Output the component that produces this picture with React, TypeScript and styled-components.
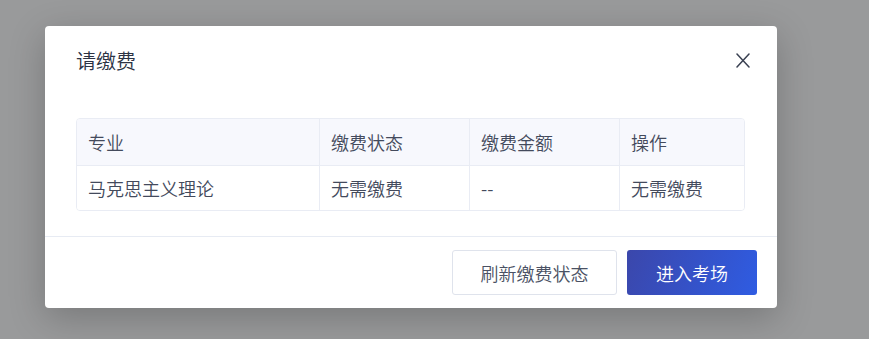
import React from "react";
import styled, { createGlobalStyle } from "styled-components";

const Global = createGlobalStyle`
  html, body { margin: 0; padding: 0; }
  body {
    background: #999a9b;
    font-family: "Noto Sans CJK SC", "Noto Sans", sans-serif;
  }
`;

const Overlay = styled.div`
  height: 339px;
  box-sizing: border-box;
  padding: 26px 0 0 45px;
  overflow: hidden;
`;

const Modal = styled.div`
  width: 732px;
  background: #ffffff;
  border-radius: 4px;
  box-shadow: 0 10px 36px rgba(0, 0, 0, 0.22);
`;

const Header = styled.div`
  display: flex;
  align-items: center;
  justify-content: space-between;
  padding: 23px 26px 0 31px;
  height: 23px;
`;

const Title = styled.h2`
  margin: 0;
  font-size: 20px;
  line-height: 22px;
  font-weight: 350;
  color: #2c3344;
`;

const CloseButton = styled.button`
  display: flex;
  align-items: center;
  justify-content: center;
  width: 16px;
  height: 16px;
  padding: 0;
  border: none;
  background: transparent;
  color: #3a4152;
  cursor: pointer;
`;

const Body = styled.div`
  padding: 46px 32px 25px 31px;
`;

const Table = styled.div`
  display: grid;
  grid-template-columns: 242px 150px 150px 1fr;
  border: 1px solid #e9ecf4;
  border-radius: 4px;
  overflow: hidden;
`;

const Cell = styled.div<{ $head?: boolean; $first?: boolean }>`
  display: flex;
  align-items: center;
  box-sizing: border-box;
  height: ${(p) => (p.$head ? 46 : 45)}px;
  padding: 0 11px;
  font-size: 18px;
  font-weight: 350;
  color: #434a5c;
  background: ${(p) => (p.$head ? "#f7f8fd" : "#ffffff")};
  border-left: ${(p) => (p.$first ? "none" : "1px solid #e9ecf4")};
  border-top: ${(p) => (p.$head ? "none" : "1px solid #e9ecf4")};
  white-space: nowrap;
`;

const Footer = styled.div`
  display: flex;
  justify-content: flex-end;
  gap: 10px;
  border-top: 1px solid #e7ebf3;
  padding: 13px 20px 13px;
`;

const Button = styled.button<{ $primary?: boolean }>`
  height: 45px;
  width: ${(p) => (p.$primary ? 130 : 165)}px;
  box-sizing: border-box;
  border-radius: 3px;
  font-family: inherit;
  font-size: 18px;
  font-weight: 350;
  cursor: pointer;
  border: ${(p) => (p.$primary ? "none" : "1px solid #dfe3ec")};
  color: ${(p) => (p.$primary ? "#ffffff" : "#4a5163")};
  background: ${(p) =>
    p.$primary ? "linear-gradient(110deg, #3b47ab 0%, #2f5ce2 100%)" : "#ffffff"};
`;

const head = ["专业", "缴费状态", "缴费金额", "操作"];
const row = ["马克思主义理论", "无需缴费", "--", "无需缴费"];

export default function App() {
  return (
    <>
      <Global />
      <Overlay>
        <Modal>
          <Header>
            <Title>请缴费</Title>
            <CloseButton aria-label="关闭">
              <svg width="14" height="15" viewBox="0 0 14 15">
                <path d="M1 1L13 14M13 1L1 14" stroke="currentColor" strokeWidth="1.5" strokeLinecap="round" />
              </svg>
            </CloseButton>
          </Header>
          <Body>
            <Table>
              {head.map((h, i) => (
                <Cell key={h} $head $first={i === 0}>
                  {h}
                </Cell>
              ))}
              {row.map((c, i) => (
                <Cell key={i} $first={i === 0}>
                  {c}
                </Cell>
              ))}
            </Table>
          </Body>
          <Footer>
            <Button>刷新缴费状态</Button>
            <Button $primary>进入考场</Button>
          </Footer>
        </Modal>
      </Overlay>
    </>
  );
}
